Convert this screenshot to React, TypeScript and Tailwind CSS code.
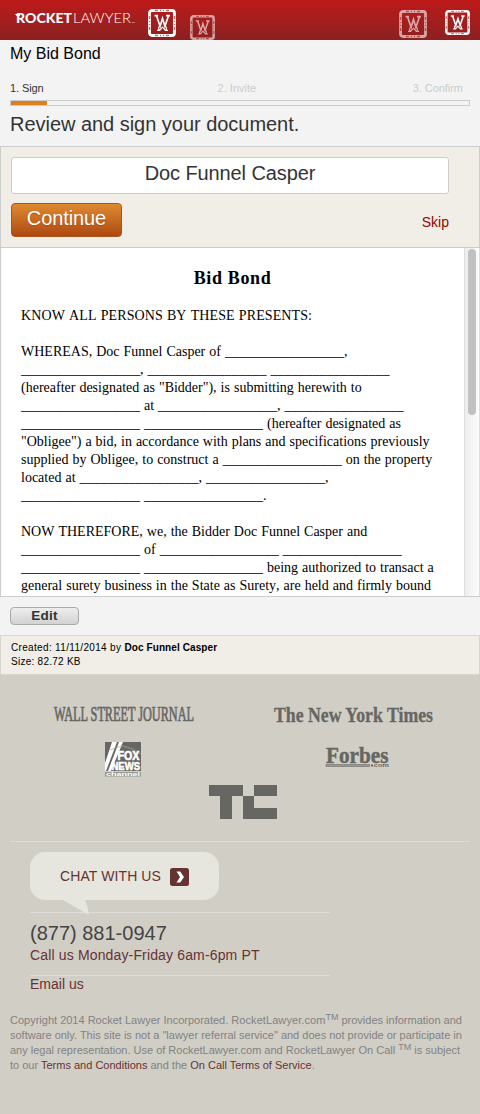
import type { ReactNode } from "react";

const blank = "_".repeat(17);

const opening = "KNOW ALL PERSONS BY THESE PRESENTS:";

const documentLines = [
  "",
  `WHEREAS, Doc Funnel Casper of ${blank},`,
  `${blank}, ${blank} ${blank}`,
  '(hereafter designated as "Bidder"), is submitting herewith to',
  `${blank} at ${blank}, ${blank}`,
  `${blank} ${blank} (hereafter designated as`,
  '"Obligee") a bid, in accordance with plans and specifications previously',
  `supplied by Obligee, to construct a ${blank} on the property`,
  `located at ${blank}, ${blank},`,
  `${blank} ${blank}.`,
  "",
  "NOW THEREFORE, we, the Bidder Doc Funnel Casper and",
  `${blank} of ${blank} ${blank}`,
  `${blank} ${blank} being authorized to transact a`,
  "general surety business in the State as Surety, are held and firmly bound",
];

function Emblem({ className }: { className: string }) {
  return (
    <svg viewBox="0 0 28 28" className={className} fill="none" stroke="white">
      <rect x="1.500" y="1.500" width="25" height="25" rx="2.500" strokeWidth="2.800" />
      <path d="M7 1.500h3m2 0h1m2 0h1m2 0h3M7 26.500h3m2 0h1m2 0h1m2 0h3M1.500 7v3m0 2v1m0 2v1m0 2v3M26.500 7v3m0 2v1m0 2v1m0 2v3" stroke="#a51c1c" strokeWidth="1.300" opacity=".65" />
      <path d="M6.500 6.600h3.500M18 6.600h4M8.500 6.800l3.600 10.500L14.500 9.500l2.400 7.800L20.500 6.800" strokeWidth="1.700" />
      <path d="M12.100 17c-2 1-1.800 2.800-.8 4.300H9M16.900 17c2 1 1.800 2.800.8 4.300H20M11.600 21.300l2.900-3.200 2.900 3.200" strokeWidth="1.200" />
    </svg>
  );
}

function Header() {
  return (
    <header className="flex h-10 shrink-0 items-start bg-linear-to-b from-[#be1919] to-[#8b2020]">
      <svg className="ml-3.5 mt-2.5 h-5 w-[124px]" viewBox="0 0 124 20" fill="white" fontFamily="Lato, sans-serif">
        <text x="2" y="13.300" fontSize="13.500" fontWeight="900" textLength="56" lengthAdjust="spacingAndGlyphs">ROCKET</text>
        <path d="M1 3.900h5v2H2.600z" />
        <text x="59" y="13.300" fontSize="13.500" fontWeight="300" textLength="58" lengthAdjust="spacingAndGlyphs">LAWYER</text>
        <text x="118" y="13.300" fontSize="2.500" textLength="3">TM</text>
      </svg>
      <Emblem className="ml-[10px] mt-[9px] size-7" />
      <Emblem className="ml-3.5 mt-[15px] size-[25px] opacity-60" />
      <Emblem className="ml-auto mt-[10px] size-7 opacity-60" />
      <Emblem className="ml-[18px] mr-[10px] mt-[10px] size-[25px]" />
    </header>
  );
}

function Progress() {
  return (
    <>
      <div className="mt-4 flex h-4 justify-between pl-2.5 pr-[17px] text-[11px] leading-4 text-[#cccccc]">
        <span className="w-[51px] tracking-[-0.1px] text-[#333333]">1. Sign</span>
        <span>2. Invite</span>
        <span className="tracking-[-0.05px]">3. Confirm</span>
      </div>
      <div className="mx-2.5 mt-1 h-1.5 border border-[#cccccc]">
        <div className="h-1 w-9 bg-[#db7f20]" />
      </div>
    </>
  );
}

function SignPanel() {
  return (
    <section className="h-[101px] shrink-0 border border-b-0 border-[#cccccc] bg-[#f1eee7] px-2.5 pt-2.5">
      <div className="h-[37px] w-[438px] rounded-[3px] border border-[#cccccc] bg-white text-center text-xl leading-[31px] tracking-[-0.1px] text-[#333333]">
        Doc Funnel Casper
      </div>
      <div className="mt-[9px] flex w-[438px] items-start justify-between">
        <button className="h-[34px] w-[111px] rounded-[4px] border border-[#ad5218] bg-linear-to-b from-[#de8a31] to-[#ae4811] pb-1 text-xl leading-[28px] tracking-[-0.1px] text-white [text-shadow:0_1px_1px_#a95018]">
          Continue
        </button>
        <a className="mt-[7px] text-sm leading-6 text-[#990000]">Skip</a>
      </div>
    </section>
  );
}

function DocumentView() {
  return (
    <section className="flex h-[350px] shrink-0 border border-r-0 border-[#cccccc] bg-white font-['Liberation_Serif',serif] text-black [font-kerning:none]">
      <div className="min-w-0 flex-1 overflow-hidden pl-5">
        <h2 className="mt-[18px] pr-5 text-center text-lg font-bold leading-6 tracking-[0.65px]">Bid Bond</h2>
        <div className="mt-[17px] text-sm leading-[18px] [word-spacing:0.5px]">
          <p className="h-[18px] whitespace-pre tracking-[0.1px]">{opening}</p>
          {documentLines.map((line, index) => (
            <p key={index} className="h-[18px] whitespace-pre">{line}</p>
          ))}
        </div>
      </div>
      <div className="w-4 border-x border-[#dddddd] bg-linear-to-r from-[#eeeeee] to-[#fcfcfc] pl-[3px] pt-px">
        <div className="h-[166px] w-2 rounded-full bg-[#c1c1c1]" />
      </div>
    </section>
  );
}

function PressLogos() {
  return (
    <svg className="mt-6 h-[126px] w-full" viewBox="0 699 480 126" fill="#666663">
      <text x="54" y="721" fontFamily="Liberation Serif, serif" fontSize="20.500" stroke="#666663" strokeWidth=".7" textLength="140" lengthAdjust="spacingAndGlyphs">WALL STREET JOURNAL</text>
      <text x="274" y="721.500" fontFamily="Liberation Serif, serif" fontSize="21" fontWeight="700" stroke="#666663" strokeWidth=".3" textLength="159" lengthAdjust="spacingAndGlyphs">The New York Times</text>
      <g>
        <rect x="105" y="742" width="36" height="29" />
        <path d="M112 742h5l-11 29h-1v-8zM119 742h4l-12 29h-3z" fill="white" />
        <path d="M110 750q17-9 31 4M121 745l20 9" stroke="#999994" strokeWidth=".6" fill="none" />
        <text x="117.500" y="759.500" fontFamily="Liberation Sans, sans-serif" fontSize="12" fontWeight="700" fill="white" stroke="white" strokeWidth=".6" textLength="22" lengthAdjust="spacingAndGlyphs">FOX</text>
        <text x="111.500" y="769.500" fontFamily="Liberation Sans, sans-serif" fontSize="11" fontWeight="700" fill="white" stroke="white" strokeWidth=".6" textLength="28.500" lengthAdjust="spacingAndGlyphs">NEWS</text>
        <rect x="105" y="772" width="36" height="4.500" fill="#999994" />
        <text x="106" y="776" fontFamily="Liberation Sans, sans-serif" fontSize="5" fontWeight="700" fill="white" textLength="34" lengthAdjust="spacingAndGlyphs">channel</text>
      </g>
      <text x="326" y="762.500" fontFamily="Liberation Serif, serif" fontSize="22.500" fontWeight="700" stroke="#666663" strokeWidth=".4" textLength="62.500" lengthAdjust="spacingAndGlyphs">Forbes</text>
      <path d="M326 764.500h43.500v2H326z" fill="#999994" stroke="#777773" strokeWidth=".7" />
      <path d="M371 764.500h2v2h-2z" />
      <text x="373.500" y="767" fontFamily="Liberation Sans, sans-serif" fontSize="5.500" fontWeight="700" textLength="15.500" lengthAdjust="spacingAndGlyphs">com</text>
      <path d="M209 785h34v11h-11v23h-12v-23h-11zM254 785h23v11h-23zM243 796h11v12h23v11h-34z" />
    </svg>
  );
}

function Contact() {
  return (
    <section className="ml-[30px] mt-2.5 w-[300px] text-sm text-[#663333]">
      <div className="relative flex h-12 w-[189px] items-center rounded-[15px] bg-[#e6e6de] pl-[30px]">
        <span className="w-[110px] whitespace-nowrap tracking-[0.1px]">CHAT WITH US</span>
        <svg className="mt-0.5 h-[18px] w-[19px]" viewBox="0 0 19 18">
          <rect width="19" height="18" rx="2.500" fill="#663333" />
          <path d="M6.500 3.500h3.700l3.800 5.500-3.800 5.500H6.500L10 9z" fill="white" />
        </svg>
        <svg className="absolute left-8 top-12 h-[15px] w-7" viewBox="0 0 28 15">
          <path d="M1 0h22q3 7 4 15z" fill="#e6e6de" />
        </svg>
      </div>
      <div className="mt-3 h-[63px] border-t border-[#dedcd6] pt-2">
        <p className="text-xl leading-[25px] text-[#444444]">(877) 881-0947</p>
        <p className="-mt-px leading-5 tracking-[0.15px]">Call us Monday-Friday 6am-6pm PT</p>
      </div>
      <p className="h-[18px] border-t border-[#dedcd6] leading-4">Email us</p>
    </section>
  );
}

function LegalLine({ children }: { children: ReactNode }) {
  return <p className="h-[15px] whitespace-nowrap">{children}</p>;
}

function Footer() {
  return (
    <footer className="flex-1 bg-[#d1cec6]">
      <PressLogos />
      <div className="mx-2.5 mt-4 border-t border-[#dedcd6]" />
      <Contact />
      <div className="ml-2.5 mt-5 text-[11px] leading-[15px] text-[#828282] [&_sup]:relative [&_sup]:-top-1 [&_sup]:align-baseline [&_sup]:text-[9px] [&_sup]:leading-none">
        <LegalLine>Copyright 2014 Rocket Lawyer Incorporated. <span className="tracking-[0.07px]">RocketLawyer.com</span><sup>TM</sup> provides information and</LegalLine>
        <LegalLine>software only. This site is not a "lawyer referral service" and does not provide or participate in</LegalLine>
        <LegalLine>any legal representation. Use of RocketLawyer.com and RocketLawyer On Call <sup>TM</sup> is subject</LegalLine>
        <LegalLine>to our <a className="text-[#663333]">Terms and Conditions</a> and the <a className="text-[#663333]">On Call Terms of Service</a>.</LegalLine>
      </div>
    </footer>
  );
}

export default function App() {
  return (
    <main className="flex h-[1114px] w-[480px] flex-col overflow-hidden bg-[#f3f3f3] font-['Liberation_Sans',sans-serif]">
      <Header />
      <h1 className="ml-2.5 mt-1 h-5 text-base leading-5 text-black">My Bid Bond</h1>
      <Progress />
      <p className="ml-2.5 mt-1.5 h-[34px] text-xl leading-6 tracking-[-0.03px] text-[#333333]">Review and sign your document.</p>
      <SignPanel />
      <DocumentView />
      <div className="h-[38px] shrink-0 pl-2.5 pt-2.5">
        <button className="block h-[18px] w-[69px] rounded-[4px] border border-[#aaaaaa] bg-linear-to-b from-[#eeeeee] to-[#d2d2d2] text-[13.5px] font-bold leading-[14px] tracking-[0.3px] text-[#333333]">Edit</button>
      </div>
      <div className="h-10 shrink-0 border border-[#d8d6d0] bg-[#f1eee7] pl-2.5 pt-[5px] text-[10px] leading-3.5 tracking-[0.26px] text-black">
        <p className="tracking-[0.33px]">Created: 11/11/2014 by <b className="tracking-[0.1px]">Doc Funnel Casper</b></p>
        <p>Size: 82.72 KB</p>
      </div>
      <Footer />
    </main>
  );
}
